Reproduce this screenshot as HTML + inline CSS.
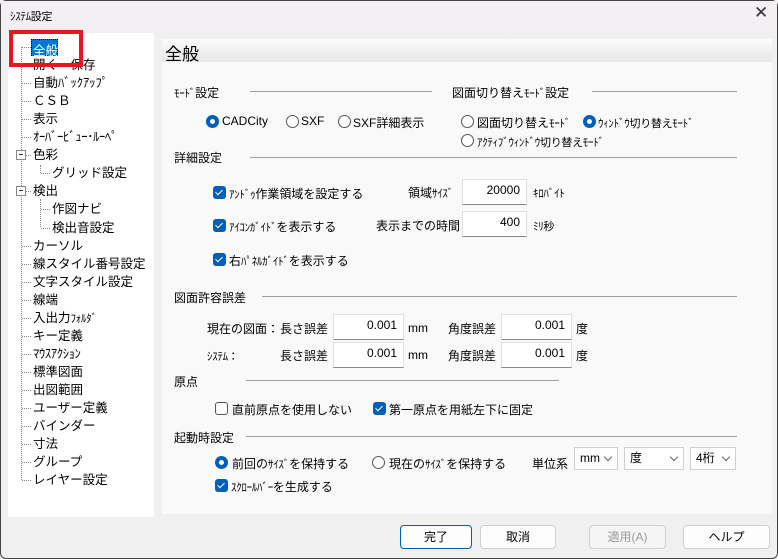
<!DOCTYPE html>
<html><head><meta charset="utf-8"><style>
*{margin:0;padding:0;box-sizing:border-box}
body{width:778px;height:559px;background:#f0f0f0;font-family:"Liberation Sans","Noto Sans CJK JP",sans-serif;font-size:12px;color:#000;position:relative;overflow:hidden}
.a{position:absolute;white-space:nowrap}
.k{font-size:11px;letter-spacing:-0.3px}
.win{position:absolute;left:0;top:0;width:778px;height:559px;border:1px solid #444;border-radius:6px}
.title{position:absolute;left:1px;top:1px;width:776px;height:29px;background:#f3eff3}
.tree{position:absolute;left:8px;top:33px;width:146px;height:484px;background:#fff}
.ti{position:absolute;line-height:14px;font-size:12.5px}
.pane{position:absolute;left:162px;top:39px;width:610px;height:475px;background:#f9f9f9}
.hdr{position:absolute;left:162px;top:39px;width:610px;height:23px;background:linear-gradient(#fafafa,#e8e8e8)}
.line{position:absolute;height:1px;background:#a0a0a0}
.rb{position:absolute;width:13px;height:13px;border-radius:50%;border:1px solid #555;background:#fff}
.rb.on{border:4px solid #005fb8}
.cb{position:absolute;width:13px;height:13px;border-radius:3px;background:#005fb8}
.cb::after{content:"";position:absolute;left:4px;top:2px;width:3px;height:6px;border:solid #fff;border-width:0 1px 1px 0;transform:rotate(45deg)}
.cb.off{background:#fff;border:1px solid #555}
.cb.off::after{display:none}
.inp{position:absolute;background:#fff;border:1px solid #e0e0e0;border-bottom:1px solid #888;text-align:right;padding-right:6px;line-height:20px;height:26px}
.sel{position:absolute;background:#fff;border:1px solid #d0d0d0;height:23px;line-height:21px;padding-left:5px}
.sel::after{content:"";position:absolute;right:6px;top:6px;width:5px;height:5px;border:solid #666;border-width:0 1px 1px 0;transform:rotate(45deg)}
.btn{position:absolute;top:525px;height:24px;background:#fdfdfd;border:1px solid #d0d0d0;border-radius:4px;text-align:center;line-height:22px}
.dv{position:absolute;border-left:1px dotted #888}
.dh{position:absolute;border-top:1px dotted #888;width:9px}
</style></head><body>
<div class="win"></div>
<div class="title"></div>
<div class="a k" style="left:10px;top:8px">ｼｽﾃﾑ設定</div>
<div class="a" style="left:754px;top:3px;font-size:17px;color:#333">✕</div>
<div class="tree"></div>
<div class="dv" style="left:21px;top:47px;height:433px"></div>
<div class="dv" style="left:40px;top:165px;height:8px"></div>
<div class="dv" style="left:40px;top:199px;height:28px"></div>
<div id="t"></div>
<div class="a" style="left:31px;top:39px;width:27px;height:17px;background:#0078d7;border:1px dotted #000"></div>
<div class="a" style="left:33px;top:40px;color:#fff;font-size:12.5px">全般</div>
<div class="a" style="left:9px;top:30px;width:74px;height:37px;border:4px solid #e8161e"></div>
<div class="pane"></div><div class="hdr"></div>
<div class="a" style="left:165px;top:40px;font-size:17px">全般</div>

<div class="a" style="left:174px;top:84px"><span class="k">ﾓｰﾄﾞ</span>設定</div><div class="line" style="left:250px;top:91px;width:182px"></div>
<div class="a" style="left:452px;top:84px">図面切り替え<span class="k">ﾓｰﾄﾞ</span>設定</div><div class="line" style="left:592px;top:91px;width:145px"></div>
<div class="rb on" style="left:206px;top:115px"></div><div class="a" style="left:222px;top:114px">CADCity</div>
<div class="rb" style="left:286px;top:115px"></div><div class="a" style="left:301px;top:114px">SXF</div>
<div class="rb" style="left:338px;top:115px"></div><div class="a" style="left:353px;top:114px">SXF詳細表示</div>
<div class="rb" style="left:461px;top:115px"></div><div class="a" style="left:477px;top:114px">図面切り替え<span class="k">ﾓｰﾄﾞ</span></div>
<div class="rb on" style="left:583px;top:115px"></div><div class="a k" style="left:598px;top:115px">ｳｨﾝﾄﾞｳ切り替えﾓｰﾄﾞ</div>
<div class="rb" style="left:461px;top:134px"></div><div class="a k" style="left:477px;top:134px">ｱｸﾃｨﾌﾞｳｨﾝﾄﾞｳ切り替えﾓｰﾄﾞ</div>
<div class="a" style="left:174px;top:149px">詳細設定</div><div class="line" style="left:250px;top:157px;width:487px"></div>
<div class="cb" style="left:213px;top:186px"></div><div class="a" style="left:229px;top:185px"><span class="k">ｱﾝﾄﾞｩ</span>作業領域を設定する</div>
<div class="a" style="left:408px;top:184px">領域<span class="k">ｻｲｽﾞ</span></div>
<div class="inp" style="left:462px;top:179px;width:65px">20000</div>
<div class="a k" style="left:533px;top:185px">ｷﾛﾊﾞｲﾄ</div>
<div class="cb" style="left:213px;top:219px"></div><div class="a" style="left:229px;top:218px"><span class="k">ｱｲｺﾝｶﾞｲﾄﾞ</span>を表示する</div>
<div class="a" style="left:376px;top:217px">表示までの時間</div>
<div class="inp" style="left:462px;top:211px;width:65px">400</div>
<div class="a k" style="left:533px;top:218px">ﾐﾘ秒</div>
<div class="cb" style="left:213px;top:253px"></div><div class="a" style="left:229px;top:252px">右<span class="k">ﾊﾟﾈﾙｶﾞｲﾄﾞ</span>を表示する</div>

<div class="a" style="left:174px;top:289px">図面許容誤差</div><div class="line" style="left:262px;top:296px;width:475px"></div>
<div class="a" style="left:207px;top:320px">現在の図面：</div>
<div class="a" style="left:280px;top:320px">長さ誤差</div>
<div class="inp" style="left:333px;top:314px;width:71px">0.001</div>
<div class="a" style="left:408px;top:321px">mm</div>
<div class="a" style="left:448px;top:320px">角度誤差</div>
<div class="inp" style="left:501px;top:314px;width:71px">0.001</div>
<div class="a" style="left:576px;top:320px">度</div>
<div class="a k" style="left:207px;top:348px">ｼｽﾃﾑ：</div>
<div class="a" style="left:280px;top:347px">長さ誤差</div>
<div class="inp" style="left:333px;top:342px;width:71px">0.001</div>
<div class="a" style="left:408px;top:348px">mm</div>
<div class="a" style="left:448px;top:347px">角度誤差</div>
<div class="inp" style="left:501px;top:342px;width:71px">0.001</div>
<div class="a" style="left:576px;top:347px">度</div>
<div class="a" style="left:174px;top:373px">原点</div><div class="line" style="left:246px;top:380px;width:313px"></div>
<div class="cb off" style="left:215px;top:402px"></div><div class="a" style="left:232px;top:401px">直前原点を使用しない</div>
<div class="cb" style="left:373px;top:402px"></div><div class="a" style="left:389px;top:401px">第一原点を用紙左下に固定</div>
<div class="a" style="left:174px;top:429px">起動時設定</div><div class="line" style="left:246px;top:436px;width:491px"></div>
<div class="rb on" style="left:215px;top:456px"></div><div class="a" style="left:232px;top:455px">前回の<span class="k">ｻｲｽﾞ</span>を保持する</div>
<div class="rb" style="left:372px;top:456px"></div><div class="a" style="left:389px;top:455px">現在の<span class="k">ｻｲｽﾞ</span>を保持する</div>
<div class="a" style="left:532px;top:455px">単位系</div>
<div class="sel" style="left:574px;top:447px;width:44px">mm</div>
<div class="sel" style="left:624px;top:447px;width:60px">度</div>
<div class="sel" style="left:690px;top:447px;width:46px">4桁</div>
<div class="cb" style="left:215px;top:479px"></div><div class="a" style="left:231px;top:478px"><span class="k">ｽｸﾛｰﾙﾊﾞｰ</span>を生成する</div>

<div class="btn" style="left:400px;width:72px;border-color:#005fb8">完了</div>
<div class="btn" style="left:480px;width:76px">取消</div>
<div class="btn" style="left:589px;width:77px;color:#9a9a9a;background:#f5f5f5">適用(A)</div>
<div class="btn" style="left:683px;width:87px">ヘルプ</div>
<script>
var items=[["",0,0],["開く・保存",0,1],["自動ﾊﾞｯｸｱｯﾌﾟ",0,2],["ＣＳＢ",0,3],["表示",0,4],["ｵｰﾊﾞｰﾋﾞｭｰ･ﾙｰﾍﾟ",0,5],["色彩",0,6,1],["グリッド設定",1,7],["検出",0,8,1],["作図ナビ",1,9],["検出音設定",1,10],["カーソル",0,11],["線スタイル番号設定",0,12],["文字スタイル設定",0,13],["線端",0,14],["入出力<span class=k>ﾌｫﾙﾀﾞ</span>",0,15],["キー定義",0,16],["ﾏｳｽｱｸｼｮﾝ",0,17],["標準図面",0,18],["出図範囲",0,19],["ユーザー定義",0,20],["バインダー",0,21],["寸法",0,22],["グループ",0,23],["レイヤー設定",0,24]];
var h="";
items.forEach(function(it){var y=40+it[2]*18.05;var x=it[1]?52:33;
if(it[0]){var c=/^[ｦ-ﾟ]/.test(it[0])?' k':'';h+='<div class="ti a'+c+'" style="left:'+x+'px;top:'+y+'px">'+it[0]+'</div>';}
h+='<div class="dh" style="left:'+(it[1]?41:22)+'px;top:'+(y+7)+'px"></div>';
if(it[3])h+='<div class="a" style="left:16px;top:'+(y+2)+'px;width:10px;height:10px;border:1px solid #888;background:#fff"><div style="position:absolute;left:2px;top:3px;width:4px;height:1px;background:#333"></div></div>';});
document.getElementById("t").innerHTML=h;
</script>
</body></html>
